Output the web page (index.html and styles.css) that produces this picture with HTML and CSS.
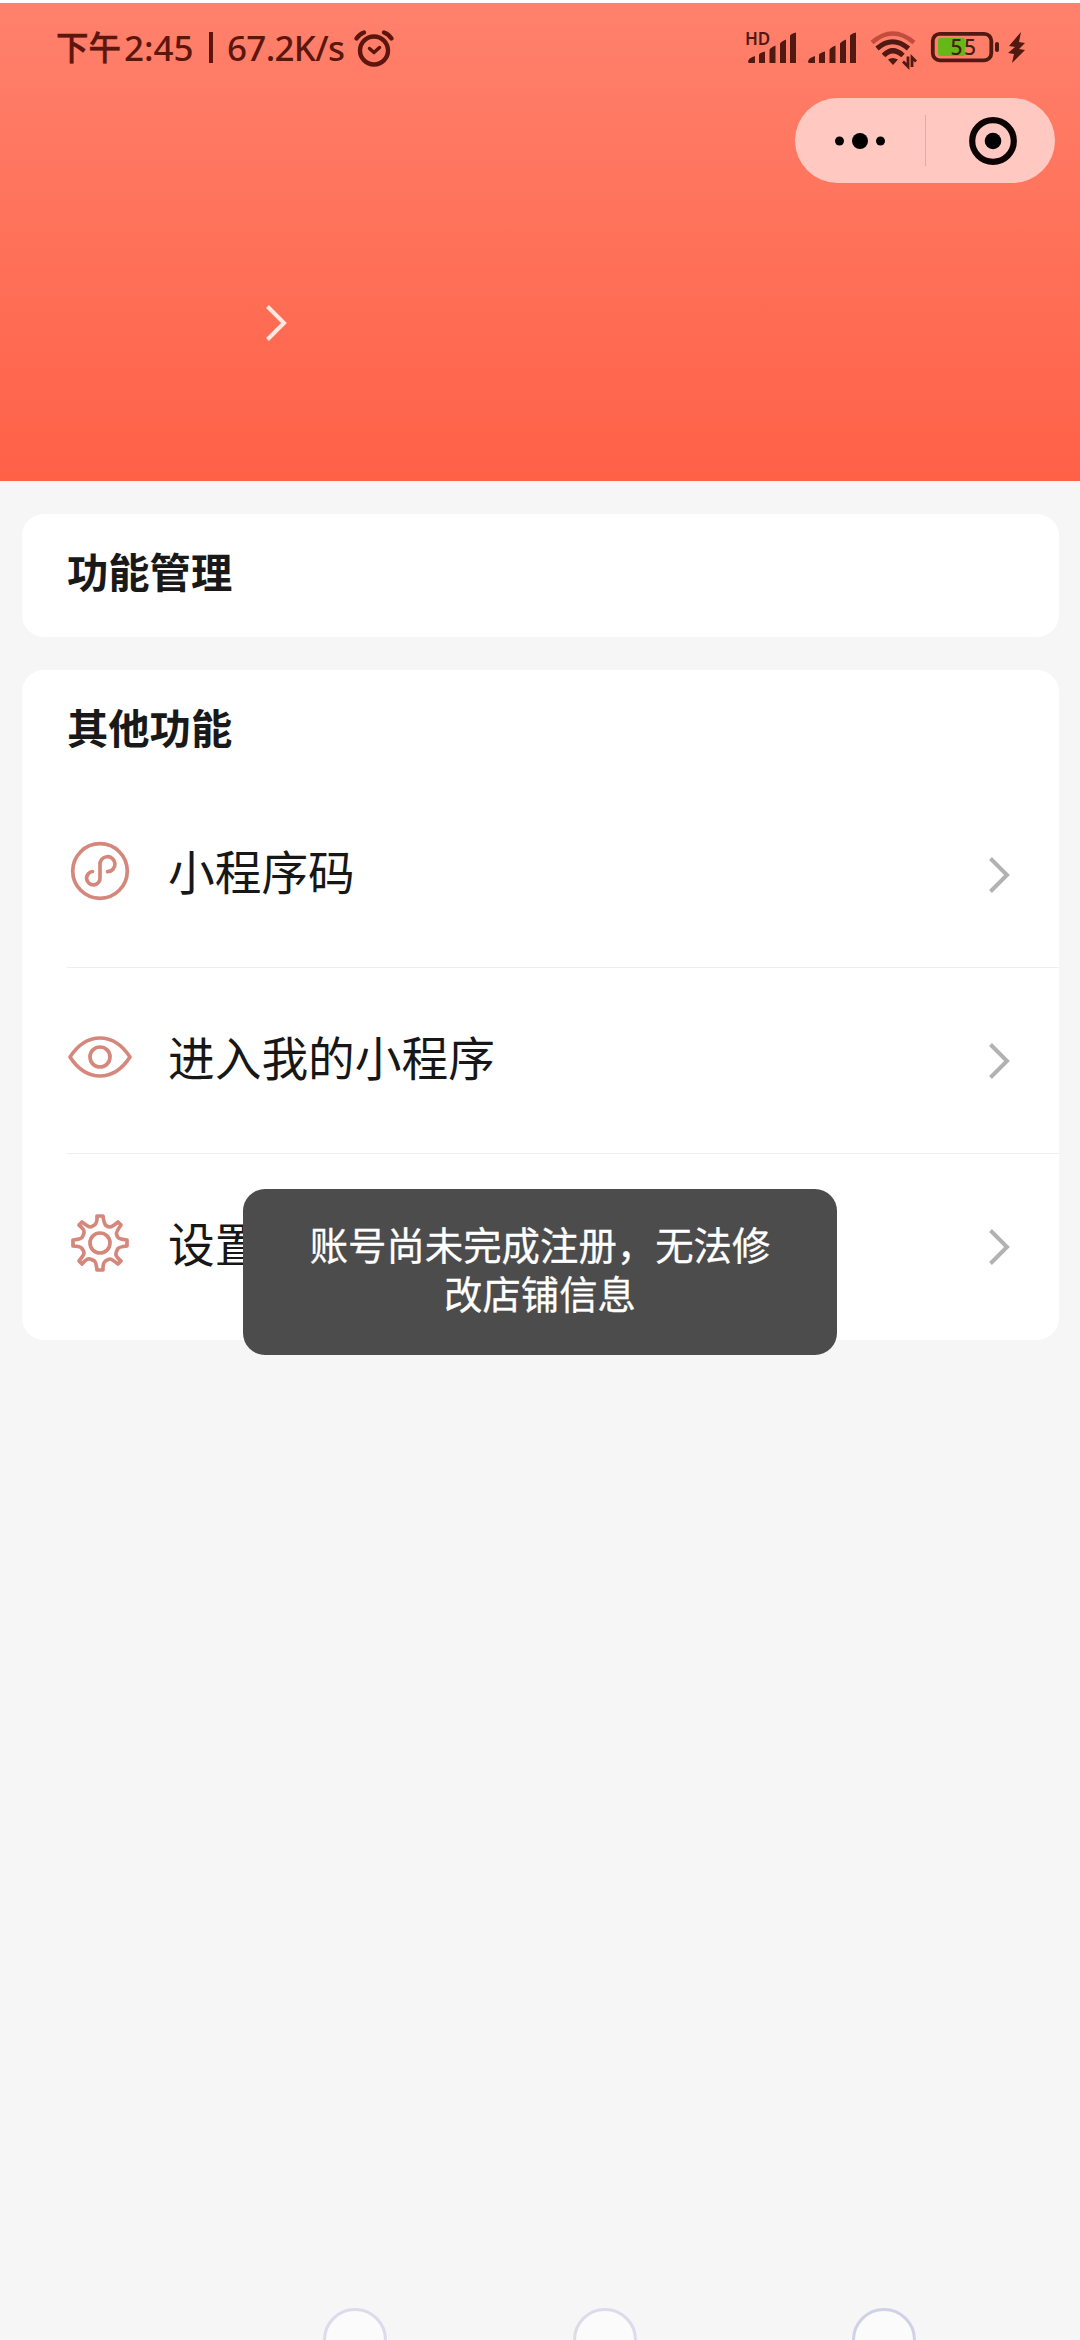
FILE: index.html
```html
<!DOCTYPE html>
<html lang="zh-CN">
<head>
<meta charset="utf-8">
<title>功能管理</title>
<link rel="stylesheet" href="styles.css">
</head>
<body>
<div class="screen">
  <header class="header">
    <div class="status">
      <div class="status-left">
        <span class="ampm">下午</span><span class="clock">2:45</span><span class="bar"></span><span class="speed">67.2K/s</span>
        <svg class="alarm" width="40" height="38" viewBox="0 0 40 38" fill="none" stroke="#5c160e" stroke-linecap="round" stroke-linejoin="round"><circle cx="20" cy="20.500" r="14" stroke-width="4.400"/><path d="M2.500 8.500Q5.500 4 10 2.500M30 2.500Q34.500 4 37.500 8.500" stroke-width="4.400"/><path d="M15.500 18.500L20 22.500 25.500 17.500" stroke-width="3.500"/></svg>
      </div>
      <div class="status-right">
        <svg width="50" height="36" viewBox="0 0 50 36" fill="#501911"><text x="-1" y="15.500" class="hd">HD</text><path d="M2 33Q2 29 9 27V34H4Q2 34 2 33ZM13 34V26Q13 24 19 22.500V34ZM23.500 34V21Q23.500 19 29.500 16.500V34ZM34 34V15Q34 13 40 10.500V34ZM44 34V7Q44 5 50 3.500V34Z"/></svg>
        <svg width="48" height="36" viewBox="2 0 48 36" fill="#501911"><path d="M2 33Q2 29 9 27V34H4Q2 34 2 33ZM13 34V26Q13 24 19 22.500V34ZM23.500 34V21Q23.500 19 29.500 16.500V34ZM34 34V15Q34 13 40 10.500V34ZM44 34V7Q44 5 50 3.500V34Z"/></svg>
        <svg width="46" height="36" viewBox="0 0 46 36" fill="none" stroke="#501911" stroke-width="5"><path d="M2 13.500Q22.500-4.500 44 13.500" stroke="#c24c3e" stroke-width="4.500"/><path d="M7 19.500Q22.500 6 38.500 19.500M13.500 26.500Q22.500 17 33 26.500"/><path d="M18 30.500Q22.500 27.500 28 30.500L23 36Z" fill="#501911" stroke="none"/><path d="M38 27.500V37.500L33 32.500M42 38V28.500L46 32.500" stroke-width="2.800"/></svg>
        <svg class="battery" width="68" height="34" viewBox="0 0 68 34"><rect x="1.800" y="3.800" width="58.500" height="26.500" rx="7" fill="none" stroke="#501911" stroke-width="3.800"/><rect x="7" y="8" width="27" height="18" rx="2" fill="#67b719"/><rect x="64" y="12" width="4" height="10" rx="2" fill="#501911"/><text x="19.500" y="25" class="level">55</text></svg>
        <svg class="bolt" width="18" height="32" viewBox="0 0 18 32" fill="#501911"><path d="M13 0L1 14 7 15 0 21 6 22 4 31 17 18 11 17 17 11 11 10Z"/></svg>
      </div>
    </div>
    <div class="capsule">
      <svg width="50" height="18" viewBox="0 0 50 18"><circle cx="4.500" cy="9" r="4.500"/><circle cx="25" cy="9" r="8"/><circle cx="45.500" cy="9" r="4.500"/></svg>
      <span class="capsule-line"></span>
      <svg class="target" width="48" height="48" viewBox="0 0 48 48"><circle cx="24" cy="24" r="20.800" fill="none" stroke="#0b0403" stroke-width="6.200"/><circle cx="24" cy="24" r="8.300"/></svg>
    </div>
    <svg class="profile-arrow" width="20" height="36" viewBox="0 0 20 36" fill="none" stroke="#ffe9e2" stroke-width="4"><path d="M1.500 1.500L18 18 1.500 34.500"/></svg>
  </header>
  <main class="content">
    <section class="card"><h2 class="title">功能管理</h2></section>
    <section class="card">
      <h2 class="title">其他功能</h2>
      <ul class="menu">
        <li class="row">
          <svg class="icon" width="64" height="60" viewBox="0 0 64 60"><circle cx="32" cy="30" r="27.300"/><path d="M24.500 30.500A6.700 6.700 0 1 0 32 36.500V24A7.500 7.500 0 1 1 39.500 30.700"/></svg>
          <span class="label">小程序码</span>
          <svg class="arrow" width="20" height="36" viewBox="0 0 20 36"><path d="M1.500 1.500L18 18 1.500 34.500"/></svg>
        </li>
        <li class="row">
          <svg class="icon" width="64" height="60" viewBox="0 0 64 60"><path d="M2 30Q14.500 11 32 11T62 30Q49.500 49 32 49T2 30Z"/><circle cx="32" cy="30" r="10"/></svg>
          <span class="label">进入我的小程序</span>
          <svg class="arrow" width="20" height="36" viewBox="0 0 20 36"><path d="M1.500 1.500L18 18 1.500 34.500"/></svg>
        </li>
        <li class="row">
          <svg class="icon" width="64" height="60" viewBox="0 0 64 60"><path d="M29 3H35Q36 11 38 12.500T42 14 50 9L53 12Q48 19 48.500 21T50 24.500 59 27V33Q51 34 50 35.500T48 40 53 48L50 51Q43.500 46 42 46T37.500 48 35 57H29Q28 49 26.500 48T22 46 14 51L11 48Q16 42 16 40T14 35.500 5 33V27Q13 26 14 24.500T16 20 11 12L14 9Q20.500 14 22 14T26.500 12 29 3Z"/><circle cx="32" cy="30" r="10"/></svg>
          <span class="label">设置</span>
          <svg class="arrow" width="20" height="36" viewBox="0 0 20 36"><path d="M1.500 1.500L18 18 1.500 34.500"/></svg>
        </li>
      </ul>
    </section>
  </main>
  <footer class="tabs"><i class="tab"></i><i class="tab"></i><i class="tab tab-blue"></i></footer>
  <div class="toast"><div>账号尚未完成注册，无法修</div><div>改店铺信息</div></div>
</div>
</body>
</html>
```

FILE: styles.css
```css
* { box-sizing: border-box; }
body { margin: 0; background: #fff; font-family: "Noto Sans CJK SC", sans-serif; }
svg { display: block; flex: none; overflow: visible; }

.screen {
  position: relative;
  display: flex;
  flex-direction: column;
  width: 1080px;
  height: 2340px;
  padding-top: 3px;
  overflow: hidden;
  background: linear-gradient(#fff 3px, #f6f6f6 3px);
}

.header {
  height: 478px;
  flex: none;
  display: flex;
  flex-direction: column;
  background: linear-gradient(#ff816c, #ff6147);
}
.status {
  height: 95px;
  padding: 0 54px 0 56px;
  display: flex;
  justify-content: space-between;
  color: #5c160e;
}
.status-left { display: flex; align-items: center; height: 89px; font: 500 35px/44px "Noto Sans", "Noto Sans CJK SC", sans-serif; white-space: nowrap; }
.ampm { width: 68px; font-size: 32.500px; -webkit-text-stroke: .5px #5c160e; }
.clock { width: 85px; }
.bar { width: 4px; height: 31px; margin-right: 14px; background: #5c160e; }
.speed { width: 127px; letter-spacing: -.700px; }
.alarm { margin-top: 3px; }
.status-right { display: flex; align-items: flex-start; padding-top: 26px; gap: 12px; }
.status-right svg:nth-child(3) { margin-left: 2px; }
.battery { margin: 1px 0 0 3px; }
.bolt { margin: 3px 0 0 -3px; }
.hd { font: 600 17px "Noto Sans", sans-serif; }
.level { font: 500 21px "Noto Sans", sans-serif; letter-spacing: 1.500px; fill: #42200c; }

.capsule {
  align-self: flex-end;
  width: 260px;
  height: 85px;
  margin-right: 25px;
  padding: 0 38px 0 40px;
  display: flex;
  align-items: center;
  border-radius: 43px;
  background: #ffc9c1;
}
.capsule-line { width: 1px; height: 51px; margin: 0 43px 0 40px; background: #e2aaa2; }
.profile-arrow { margin: 122px 0 0 266px; }

.content { flex: 1; padding: 33px 21px 0 22px; display: flex; flex-direction: column; gap: 33px; }
.card { padding-left: 45px; border-radius: 22px; background: #fff; }
.title { margin: 0; height: 123px; padding-bottom: 11px; display: flex; align-items: center; font-size: 41.300px; font-weight: 700; line-height: 60px; color: #191919; }
.card + .card .title { height: 112px; padding: 0 0 1px; }
.menu { margin: 0; padding: 0; list-style: none; }
.row { height: 186px; padding: 0 50px 0 1px; display: flex; align-items: center; border-bottom: 1px solid #eee; }
.row:last-child { border-bottom-color: transparent; }
.icon { margin-bottom: 8px; fill: none; stroke: #d5877b; stroke-width: 3.700; stroke-linecap: round; stroke-linejoin: round; }
.label { flex: 1; margin: 0 0 9px 36px; font-size: 46.700px; line-height: 68px; color: #171717; }
.arrow { fill: none; stroke: #b2b2b2; stroke-width: 4; }

.tabs { height: 32px; padding-left: 323px; display: flex; }
.tab { flex: none; width: 64px; height: 64px; margin-right: 186px; border: 3px solid #dddaec; border-radius: 50%; background: #fbfbfc; }
.tab:nth-child(2) { margin-right: 215px; }
.tab-blue { border-color: #cfd1e7; margin-right: 0; }

.toast {
  position: absolute;
  left: 243px;
  top: 1189px;
  width: 594px;
  height: 166px;
  padding-top: 30px;
  border-radius: 22px;
  background: #4c4c4c;
  color: #fff;
  font-size: 38.400px;
  line-height: 49px;
  text-align: center;
  white-space: nowrap;
  -webkit-text-stroke: .3px #fff;
}
```
